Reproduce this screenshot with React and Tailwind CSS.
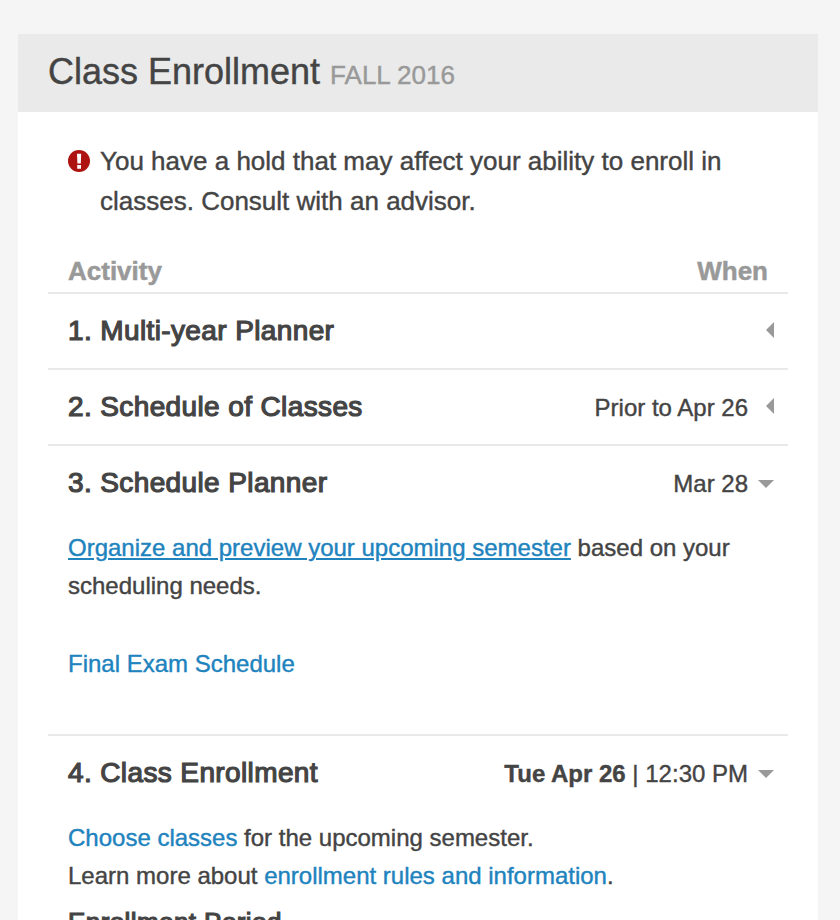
const Left = () => (
  <svg className="block h-4 w-2" viewBox="0 0 8 16" fill="#999"><path d="M8 0v16L0 8z" /></svg>
);
const Down = () => (
  <svg className="block h-2 w-4" viewBox="0 0 16 8" fill="#999"><path d="M0 0h16L8 8z" /></svg>
);
const Row = ({ title, when, open, children }) => (
  <section className="border-t-2 border-[#e9e9e9] px-5">
    <div className="flex h-[74px] items-center">
      <h2 className="whitespace-nowrap text-[28px] leading-[38px] tracking-[0.38px] [-webkit-text-stroke:1.2px_#444]">{title}</h2>
      <div className="ml-auto whitespace-nowrap pt-px text-[24px] leading-[36px]">{when}</div>
      <div className={open ? "ml-[10px] -mr-[6px] pt-px" : "ml-[18px] -mr-[6px] pb-[2px]"}>{open ? <Down /> : <Left />}</div>
    </div>
    {children}
  </section>
);

export default function App() {
  return (
    <div className="h-[920px] w-[840px] overflow-hidden bg-[#f5f5f5] px-[18px] pt-[34px] pr-[22px] font-['Liberation_Sans',Arial,sans-serif] text-[#444] [-webkit-text-stroke:0.4px_currentColor]">
      <main className="h-[886px] w-[800px] bg-white">
        <header className="flex h-[78px] items-baseline bg-[#eaeaea] px-[30px] pt-4">
          <h1 className="whitespace-nowrap text-[36px] leading-[44px]">Class Enrollment</h1>
          <span className="ml-[10px] whitespace-nowrap text-[26px] text-[#999]">FALL 2016</span>
        </header>
        <div className="px-[30px] pt-[29px]">
          <div className="flex px-5">
            <svg className="mt-[9px] h-[22px] w-[22px] shrink-0" viewBox="0 0 22 22">
              <circle cx="11" cy="11" r="11" fill="#ad1310" />
              <path d="M9 3.7h4.2l-.4 9.8H9.4zM9.2 15H13v3.7H9.2z" fill="#fff" />
            </svg>
            <p className="ml-[10px] whitespace-nowrap text-[26px] leading-[40px]">You have a hold that may affect your ability to enroll in<br />classes. Consult with an advisor.</p>
          </div>
          <div className="mt-[30px] flex h-[41px] justify-between px-5 text-[26px] font-bold leading-[40px] text-[#999] [-webkit-text-stroke:0.5px_#999]">
            <span>Activity</span><span>When</span>
          </div>
          <Row title="1. Multi-year Planner" />
          <Row title="2. Schedule of Classes" when="Prior to Apr 26" />
          <Row title="3. Schedule Planner" when="Mar 28" open>
            <div className="h-[214px] whitespace-nowrap pt-[9px] text-[24px] leading-[38px]">
              <p><a className="text-[#2083be] underline [-webkit-text-stroke:0.4px_#2083be]">Organize and preview your upcoming semester</a> based on your<br />scheduling needs.</p>
              <p className="mt-10 text-[#2083be] [-webkit-text-stroke:0.4px_#2083be]">Final Exam Schedule</p>
            </div>
          </Row>
          <Row title="4. Class Enrollment" when={<><b>Tue Apr 26</b> | 12:30 PM</>} open>
            <div className="whitespace-nowrap pt-[9px] text-[24px] leading-[38px]">
              <p><a className="text-[#2083be]">Choose classes</a> for the upcoming semester.</p>
              <p>Learn more about <a className="text-[#2083be]">enrollment rules and information</a>.</p>
              <h3 className="mt-2 text-[26px] tracking-[0.42px] [-webkit-text-stroke:1.2px_#444]">Enrollment Period</h3>
            </div>
          </Row>
        </div>
      </main>
    </div>
  );
}
